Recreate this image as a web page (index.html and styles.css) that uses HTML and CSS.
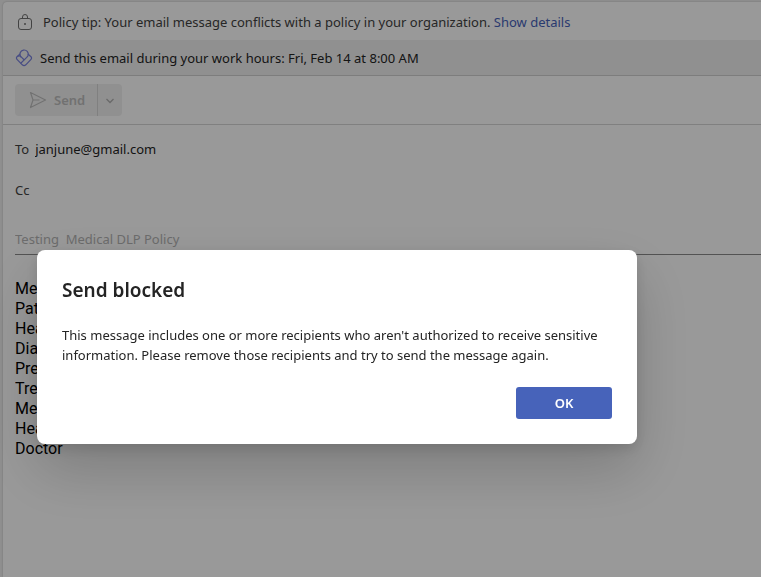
FILE: index.html
```html
<!DOCTYPE html>
<html lang="en">
<head>
<meta charset="utf-8">
<title>New message</title>
<link rel="stylesheet" href="styles.css">
</head>
<body>
<main class="compose">
  <div class="notice">
    <svg class="lock-icon" width="16" height="18" viewBox="0 0 16 18" fill="none" stroke="currentColor" aria-hidden="true">
      <rect x="1.500" y="5.500" width="13" height="11" rx="2.5"/>
      <path d="M5.500 5.500V4a2.500 2.500 0 0 1 5 0v1.500"/>
      <circle cx="8" cy="11" r="1" fill="currentColor" stroke="none"/>
    </svg>
    <p>Policy tip: Your email message conflicts with a policy in your organization. <a href="#details">Show details</a></p>
  </div>
  <div class="notice notice-hours">
    <svg class="viva-icon" width="18" height="18" viewBox="0 0 18 18" fill="none" stroke="currentColor" stroke-width="1.2" stroke-linejoin="round" stroke-linecap="round" aria-hidden="true">
      <path d="M4.800 5.200 2 7.700a1.800 1.800 0 0 0 0 2.600L7.300 15.800a2.500 2.500 0 0 0 3.500 0L16 10.300a1.800 1.800 0 0 0 0-2.600L13.200 5.200"/>
      <path d="M5.800 7.800a4.200 4.200 0 1 1 7.300-1.300c-.3.900-1 1.500-1.600 2.100L6 14"/>
      <path d="M3 7.200c1.500-.6 2.600.1 3.400.9l2.400 2.400"/>
    </svg>
    <p>Send this email during your work hours: Fri, Feb 14 at 8:00 AM</p>
  </div>
  <div class="toolbar">
    <div class="split">
      <button class="send" type="button" disabled>
        <svg width="18" height="18" viewBox="0 0 18 18" fill="none" stroke="currentColor" stroke-width="1.2" stroke-linejoin="round" aria-hidden="true">
          <path d="M1.500 1.500 16.500 9l-15 7.500L4 9zM4 9h6.500"/>
        </svg>
        Send
      </button>
      <button class="more" type="button" aria-label="More send options" disabled>
        <svg width="10" height="10" viewBox="0 0 10 10" fill="none" stroke="currentColor" stroke-width="1.300" aria-hidden="true"><path d="M1.500 4 5 7.500 8.500 4"/></svg>
      </button>
    </div>
  </div>
  <form class="fields">
    <div class="row"><label for="to">To</label><input id="to" type="text" value="janjune@gmail.com"></div>
    <div class="row"><label for="cc">Cc</label><input id="cc" type="text"></div>
    <input class="subject" type="text" aria-label="Subject" value="Testing  Medical DLP Policy">
    <textarea class="message" rows="9" aria-label="Message body">Me
Pat
Hea
Dia
Pre
Trea
Me
Hea
Doctor</textarea>
  </form>
</main>
<div class="overlay">
  <section class="dialog" role="alertdialog" aria-modal="true" aria-labelledby="title" aria-describedby="text">
    <h1 id="title">Send blocked</h1>
    <p id="text">This message includes one or more recipients who aren't authorized to receive sensitive information. Please remove those recipients and try to send the message again.</p>
    <div class="actions"><button class="ok" type="button">OK</button></div>
  </section>
</div>
</body>
</html>
```
FILE: styles.css
```css
* { box-sizing: border-box; }

body {
  margin: 0;
  min-height: 100vh;
  padding: 2px 0 0 3px;
  display: flex;
  overflow: hidden;
  background: #efefef;
  color: #242424;
  font: 13px/20px "Noto Sans", "Open Sans", sans-serif;
}

p, h1 { margin: 0; }
svg { display: block; flex: none; }

button, input, textarea {
  margin: 0;
  padding: 0;
  border: 0;
  background: none;
  color: inherit;
  font: inherit;
  outline: 0;
}

.compose {
  flex: 1;
  min-width: 0;
  background: #fff;
  border-radius: 4px 0 0 0;
  box-shadow: 0 0 2px #00000040;
}

.notice {
  display: flex;
  align-items: center;
  gap: 10px;
  height: 38px;
  padding: 2px 14px 0;
  color: #424242;
}
.notice a { color: #4763ba; text-decoration: none; }
.notice-hours {
  gap: 7px;
  height: 36px;
  padding: 0 12px;
  background: #f0f0f0;
  border-bottom: 1px solid #d1d1d1;
  color: #242424;
}
.lock-icon { color: #707070; }
.viva-icon { color: #7880dc; }

.toolbar {
  padding: 8px 12px;
  border-bottom: 1px solid #d6d6d6;
}
.split { display: flex; height: 32px; }
.split button { background: #f0f0f0; color: #bdbdbd; }
.send {
  display: flex;
  align-items: center;
  gap: 7px;
  padding: 0 12px 0 14px;
  border-radius: 4px 0 0 4px;
  font-weight: 600;
}
.split .more {
  display: grid;
  place-items: center;
  width: 25px;
  border-left: 1px solid #d6d6d6;
  border-radius: 0 4px 4px 0;
  color: #b0b0b0;
}

.fields { padding: 3px 0 0 12px; }
.row {
  display: flex;
  align-items: center;
  gap: 6px;
  height: 41px;
}
.row label { color: #424242; }
.row input { flex: 1; min-width: 0; }
.subject {
  display: block;
  width: 100%;
  height: 45px;
  padding-top: 14px;
  border-bottom: 1px solid #8a8a8a;
  color: #b4b4b4;
  white-space: pre;
}
.message {
  display: block;
  width: 100%;
  margin-top: 24px;
  resize: none;
  overflow: hidden;
  color: #000;
  font: 16px/20px Roboto, "Liberation Sans", sans-serif;
}

.overlay {
  position: fixed;
  inset: 0;
  padding: 250px 37px 0;
  background: #0006;
}
.dialog {
  max-width: 600px;
  padding: 24px 25px 25px;
  background: #fff;
  border-radius: 8px;
  box-shadow: 0 26px 58px #00000030, 0 5px 14px #00000020;
}
.dialog h1 {
  margin-bottom: 19px;
  font-size: 19px;
  line-height: 32px;
  font-weight: 600;
}
.actions {
  display: flex;
  justify-content: flex-end;
  margin-top: 22px;
}
.ok {
  width: 96px;
  height: 32px;
  border-radius: 3px;
  background: #4763ba;
  color: #fff;
  font-weight: 600;
}
```
